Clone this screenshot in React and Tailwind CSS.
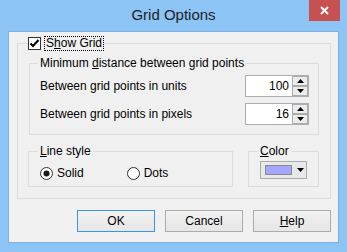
import React from "react";

function Spin({ value }) {
  return (
    <div className="flex h-[22px] w-[64px] border border-[#abadb3] bg-white">
      <div className="flex-1 text-right pr-[3px] leading-[20px]">{value}</div>
      <div className="flex w-[16px] flex-col">
        {["up", "down"].map((d) => (
          <div
            key={d}
            className="flex h-[10px] items-center justify-center border border-[#acacac] bg-[#ececec]"
          >
            <svg width="7" height="4" viewBox="0 0 7 4">
              {d === "up" ? (
                <path d="M0 4 L3.5 0 L7 4 Z" fill="#000" />
              ) : (
                <path d="M0 0 L3.5 4 L7 0 Z" fill="#000" />
              )}
            </svg>
          </div>
        ))}
      </div>
    </div>
  );
}

function Radio({ checked, label }) {
  return (
    <div className="flex items-center gap-[4px]">
      <svg width="13" height="13" viewBox="0 0 13 13">
        <circle cx="6.5" cy="6.5" r="6" fill="#fff" stroke="#333" />
        {checked && <circle cx="6.5" cy="6.5" r="3" fill="#1a1a1a" />}
      </svg>
      <span className="leading-[13px]">{label}</span>
    </div>
  );
}

export default function App() {
  return (
    <div className="flex h-[252px] w-[347px] flex-col bg-[#8cc4f5] font-['Liberation_Sans',Arial,sans-serif] text-[12px] text-black">
      {/* title bar */}
      <div className="relative flex h-[31px] items-center justify-center">
        <span className="text-[15px] text-[#1e1e1e]">Grid Options</span>
        <div className="absolute right-[7px] top-0 flex h-[21px] w-[31px] items-center justify-center bg-[#c75050]">
          <svg width="9" height="9" viewBox="0 0 9 9">
            <path d="M1 1 L8 8 M8 1 L1 8" stroke="#fff" strokeWidth="2" />
          </svg>
        </div>
      </div>

      {/* client area */}
      <div className="mx-[8px] mb-[9px] flex flex-1 flex-col border border-[#7fb0e0] bg-[#f0f0f0]">
        <fieldset className="ml-[8px] mt-[4px] w-[313px] border border-[#dcdcdc]">
          <legend className="ml-[10px] flex items-center gap-[3px]">
            <svg width="13" height="13" viewBox="0 0 13 13">
              <rect x="0.5" y="0.5" width="12" height="12" fill="#fff" stroke="#333" />
              <path d="M2.5 6.5 L5 9 L10.5 3" fill="none" stroke="#000" strokeWidth="2" />
            </svg>
            <span className="border border-dotted border-black px-[1px] leading-[13px]">
              S<u>h</u>ow Grid
            </span>
          </legend>

          <div className="px-[11px] pb-[11px]">
            <fieldset className="mt-[5px] border border-[#dcdcdc]">
              <legend className="ml-[8px] px-[2px] leading-[15px]">
                Minimum <u>d</u>istance between grid points
              </legend>
              <div className="flex flex-col gap-[6px] pb-[9px] pl-[10px] pr-[9px] pt-[4px]">
                <div className="flex items-center justify-between">
                  <span>Between grid points in units</span>
                  <Spin value="100" />
                </div>
                <div className="flex items-center justify-between">
                  <span>Between grid points in pixels</span>
                  <Spin value="16" />
                </div>
              </div>
            </fieldset>

            <div className="mt-[9px] flex gap-[15px]">
              <fieldset className="-ml-[1px] w-[205px] border border-[#dcdcdc]">
                <legend className="ml-[9px] px-[2px] leading-[15px]">
                  <u>L</u>ine style
                </legend>
                <div className="flex gap-[43px] pb-[6px] pl-[11px] pt-[8px]">
                  <Radio checked label="Solid" />
                  <Radio label="Dots" />
                </div>
              </fieldset>
              <fieldset className="w-[71px] border border-[#dcdcdc]">
                <legend className="ml-[9px] px-[2px] leading-[15px]">
                  <u>C</u>olor
                </legend>
                <div className="pb-[7px] pl-[11px] pt-[2px]">
                  <div className="flex h-[18px] w-[47px] items-center border border-[#acacac] bg-[#e8e8e8] pl-[4px]">
                    <div className="h-[10px] w-[27px] border border-[#8a8a8a] bg-[#a6a6ff]" />
                    <svg className="ml-[5px]" width="7" height="4" viewBox="0 0 7 4">
                      <path d="M0 0 L3.5 4 L7 0 Z" fill="#000" />
                    </svg>
                  </div>
                </div>
              </fieldset>
            </div>
          </div>
        </fieldset>

        <div className="mt-[11px] flex justify-end gap-[10px] pr-[7px]">
          <button className="h-[22px] w-[78px] border border-[#3c94e6] bg-gradient-to-b from-[#f2f2f2] to-[#e6e6e6]">
            OK
          </button>
          <button className="h-[22px] w-[78px] border border-[#acacac] bg-gradient-to-b from-[#f2f2f2] to-[#e6e6e6]">
            Cancel
          </button>
          <button className="h-[22px] w-[78px] border border-[#acacac] bg-gradient-to-b from-[#f2f2f2] to-[#e6e6e6]">
            <u>H</u>elp
          </button>
        </div>
      </div>
    </div>
  );
}
